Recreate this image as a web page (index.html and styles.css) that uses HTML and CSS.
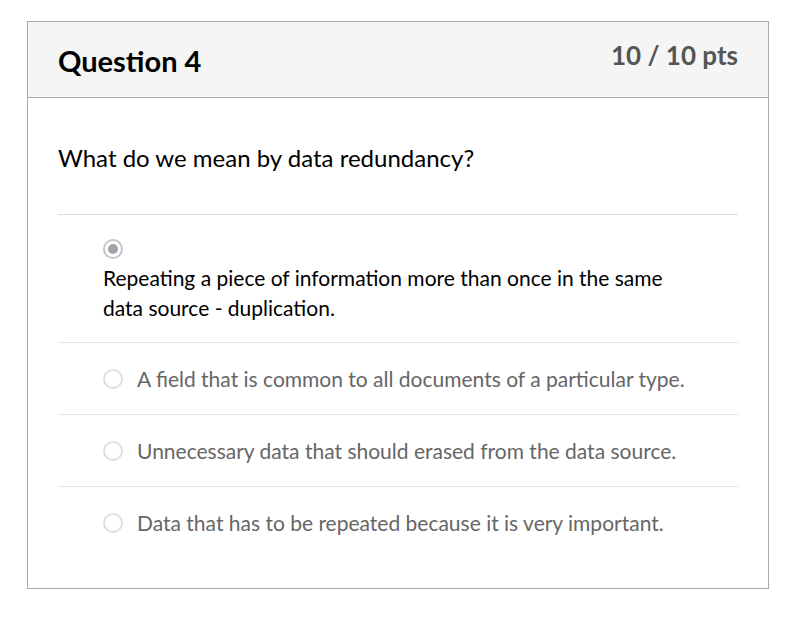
FILE: index.html
```html
<!DOCTYPE html>
<html>
<head>
<meta charset="utf-8">
<link rel="stylesheet" href="styles.css">
</head>
<body>
<div class="card">
  <div class="header">
    <h2 class="title">Question 4</h2>
    <div class="points">10 / 10 pts</div>
  </div>
  <div class="body">
    <div class="question">What do we mean by data redundancy?</div>
    <div class="answers">
      <div class="answer selected">
        <span class="radio checked"></span>
        <div class="text">Repeating a piece of information more than once in the same data source - duplication.</div>
      </div>
      <div class="answer">
        <span class="radio"></span>
        <div class="text">A field that is common to all documents of a particular type.</div>
      </div>
      <div class="answer">
        <span class="radio"></span>
        <div class="text">Unnecessary data that should erased from the data source.</div>
      </div>
      <div class="answer last">
        <span class="radio"></span>
        <div class="text">Data that has to be repeated because it is very important.</div>
      </div>
    </div>
  </div>
</div>
</body>
</html>
```
FILE: styles.css
```css
* { box-sizing: border-box; }
html, body { margin: 0; padding: 0; background: #fff; }
body {
  font-family: Lato, "Open Sans", sans-serif;
  padding: 21px 0 0 27px;
}
.card {
  width: 742px;
  height: 568px;
  border: 1px solid #aaaaaa;
}
.header {
  height: 76px;
  background: #f5f5f5;
  border-bottom: 1px solid #aaaaaa;
  display: flex;
  justify-content: space-between;
  padding: 0 30px;
}
.title {
  margin: 0;
  font-size: 29px;
  font-weight: 700;
  color: #000;
  line-height: 34px;
  padding-top: 22px;
}
.points {
  font-size: 26px;
  font-weight: 700;
  color: #555;
  line-height: 32px;
  padding-top: 17px;
}
.body {
  padding: 43px 30px 0 30px;
}
.question {
  font-size: 24px;
  line-height: 33px;
  color: #000;
  padding-bottom: 40px;
  border-bottom: 1px solid #dddddd;
}
.answer {
  display: flex;
  align-items: center;
  height: 72px;
  padding-left: 45px;
  border-bottom: 1px solid #e6e6e6;
  font-size: 21px;
  color: #666;
}
.answer.last { border-bottom: none; }
.answer .text { margin-left: 14px; line-height: 30px; }
.answer.selected {
  display: block;
  height: auto;
  padding-top: 24px;
  padding-bottom: 20px;
  color: #000;
}
.answer.selected .text {
  margin: 4px 0 0 0;
  line-height: 29.5px;
  width: 600px;
}
.radio {
  display: block;
  flex: none;
  width: 20px;
  height: 20px;
  border-radius: 50%;
  border: 2px solid #dedee4;
  background: #fff;
}
.radio.checked {
  border-color: #c6c6cd;
  position: relative;
}
.radio.checked::after {
  content: "";
  position: absolute;
  left: 3px;
  top: 3px;
  width: 10px;
  height: 10px;
  border-radius: 50%;
  background: #a3a3ab;
}
```
